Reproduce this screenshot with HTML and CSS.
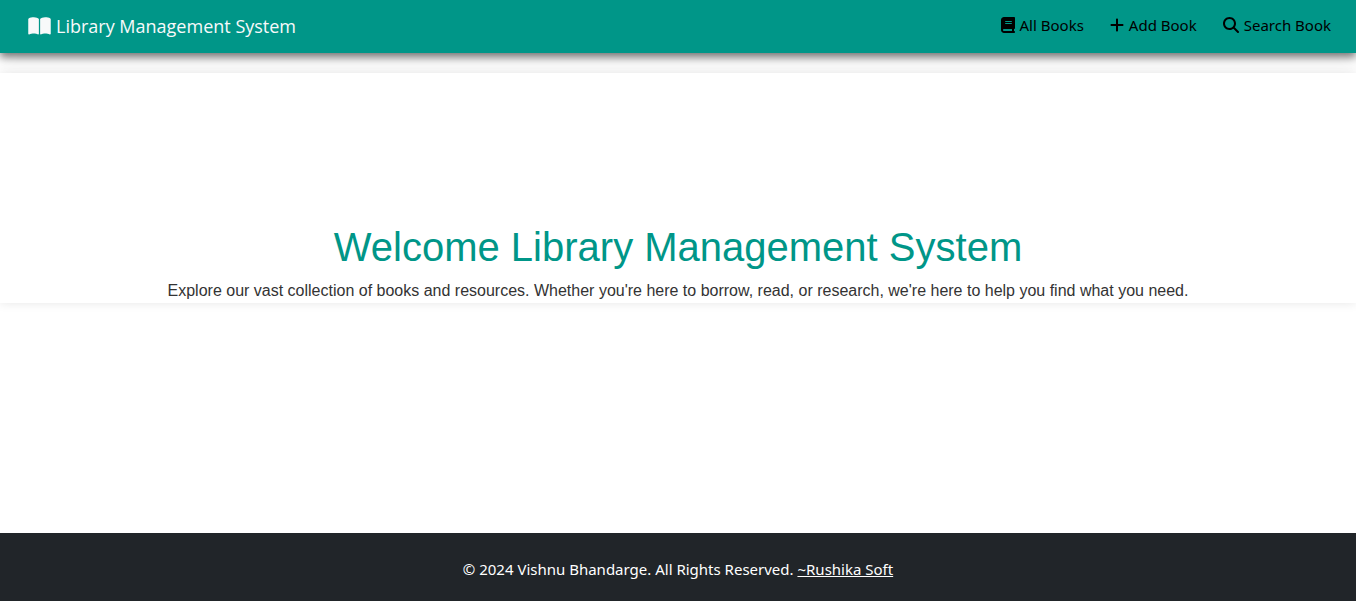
FILE: index.html
```html
<!DOCTYPE html>
<html lang="en">
<head>
<meta charset="utf-8">
<meta name="viewport" content="width=device-width, initial-scale=1">
<title>Library Management System</title>
<link rel="stylesheet" href="styles.css">
</head>
<body>
<header class="navbar">
  <a class="brand" href="#">
    <svg class="icon-brand" viewBox="0 0 576 512" aria-hidden="true"><path d="M249.600 471.500c10.800 3.800 22.400-4.100 22.400-15.500V78.600c0-4.200-1.600-8.400-5-11C247.400 52 202.400 32 144 32C93.500 32 46.300 45.300 18.100 56.100C6.800 60.500 0 71.700 0 83.800V454.100c0 11.900 12.800 20.200 24.100 16.500C55.600 460.100 105.500 448 144 448c33.900 0 79 14 105.600 23.500zm76.800 0C353 462 398.100 448 432 448c38.500 0 88.400 12.100 119.900 22.600c11.300 3.800 24.100-4.600 24.100-16.500V83.800c0-12.100-6.800-23.300-18.100-27.600C529.700 45.300 482.500 32 432 32c-58.400 0-103.400 20-123 35.600c-3.300 2.600-5 6.800-5 11V456c0 11.400 11.700 19.300 22.400 15.500z"/></svg>
    <span>Library Management System</span>
  </a>
  <nav class="menu">
    <a class="menu-link" href="#">
      <svg class="icon icon-narrow" viewBox="0 0 448 512" aria-hidden="true"><path d="M96 0C43 0 0 43 0 96V416c0 53 43 96 96 96H384h32c17.700 0 32-14.300 32-32s-14.300-32-32-32V384c17.700 0 32-14.300 32-32V32c0-17.700-14.300-32-32-32H384 96zm0 384H352v64H96c-17.700 0-32-14.300-32-32s14.300-32 32-32zm32-240c0-8.800 7.200-16 16-16H336c8.800 0 16 7.200 16 16s-7.200 16-16 16H144c-8.800 0-16-7.200-16-16zm16 48H336c8.800 0 16 7.200 16 16s-7.200 16-16 16H144c-8.800 0-16-7.200-16-16s7.200-16 16-16z"/></svg>
      <span>All Books</span>
    </a>
    <a class="menu-link" href="#">
      <svg class="icon icon-narrow" viewBox="0 0 448 512" aria-hidden="true"><path d="M256 80c0-17.700-14.300-32-32-32s-32 14.300-32 32V224H48c-17.700 0-32 14.300-32 32s14.300 32 32 32H192V432c0 17.700 14.300 32 32 32s32-14.300 32-32V288H400c17.700 0 32-14.300 32-32s-14.300-32-32-32H256V80z"/></svg>
      <span>Add Book</span>
    </a>
    <a class="menu-link" href="#">
      <svg class="icon" viewBox="0 0 512 512" aria-hidden="true"><path d="M416 208c0 45.900-14.900 88.300-40 122.700L502.600 457.400c12.500 12.500 12.500 32.800 0 45.300s-32.800 12.500-45.300 0L330.700 376c-34.400 25.200-76.800 40-122.700 40C93.100 416 0 322.900 0 208S93.100 0 208 0S416 93.100 416 208zM208 352a144 144 0 1 0 0-288 144 144 0 1 0 0 288z"/></svg>
      <span>Search Book</span>
    </a>
  </nav>
</header>
<main class="content">
  <section class="welcome">
    <h1 class="welcome-title">Welcome Library Management System</h1>
    <p class="welcome-text">Explore our vast collection of books and resources. Whether you're here to borrow, read, or research, we're here to help you find what you need.</p>
  </section>
</main>
<footer class="footer">
  <p class="footer-text">© 2024 Vishnu Bhandarge. All Rights Reserved. <a class="footer-link" href="#">~Rushika Soft</a></p>
</footer>
</body>
</html>
```
FILE: styles.css
```css
* {
  box-sizing: border-box;
}

body {
  display: flex;
  flex-direction: column;
  min-height: 100vh;
  margin: 0;
  background: #fff;
  font-family: "Segoe UI", "Noto Sans", sans-serif;
  font-size: 15px;
  line-height: 24px;
}

.navbar {
  display: flex;
  flex-wrap: wrap;
  align-items: center;
  justify-content: space-between;
  padding: 11px 25px 12px 28px;
  background: #009688;
  box-shadow: 0 4px 8px rgba(0, 0, 0, 0.5), 0 6px 20px rgba(0, 0, 0, 0.1);
}

.brand {
  display: flex;
  align-items: center;
  gap: 5px;
  color: #f8f9fa;
  font-family: "Segoe UI", "Open Sans", sans-serif;
  font-size: 18px;
  line-height: 30px;
  text-decoration: none;
}

.icon-brand {
  width: 23px;
  height: 20px;
  fill: currentColor;
}

.menu {
  display: flex;
  flex-wrap: wrap;
  gap: 26px;
  padding-bottom: 2px;
}

.menu-link {
  display: flex;
  align-items: center;
  gap: 5px;
  color: #000;
  text-decoration: none;
}

.icon {
  width: 16px;
  height: 16px;
  fill: currentColor;
}

.icon-narrow {
  width: 14px;
}

.content {
  flex: 1;
  padding-top: 20px;
}

.welcome {
  position: relative;
  padding-top: 150px;
  background: #fff;
  box-shadow: 0 0 10px rgba(0, 0, 0, 0.1);
  font-family: Arial, "Liberation Sans", sans-serif;
  text-align: center;
}

.welcome-title {
  margin: 0 0 8px;
  color: #009688;
  font-size: 40px;
  font-weight: 400;
  line-height: 48px;
}

.welcome-text {
  margin: 0;
  color: #333;
  font-size: 16px;
}

.footer {
  padding: 24px 16px 20px;
  background: #212529;
  color: #fff;
  text-align: center;
}

.footer-text {
  margin: 0;
}

.footer-link {
  color: inherit;
}
```
